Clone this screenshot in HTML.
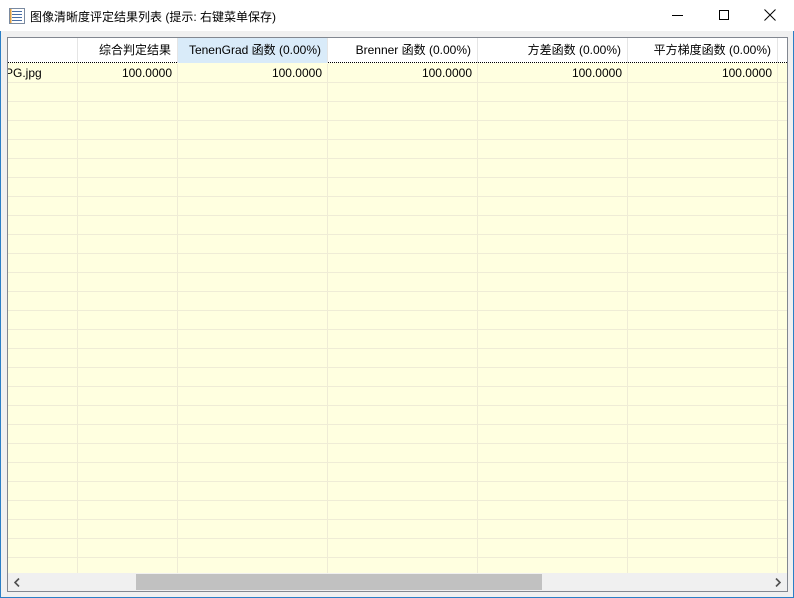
<!DOCTYPE html>
<html><head><meta charset="utf-8"><style>
*{margin:0;padding:0;box-sizing:border-box}
body{width:794px;height:598px;overflow:hidden;background:#f0f0f0;font-family:"Liberation Sans","Noto Sans CJK SC",sans-serif;font-size:12px;color:#000;position:relative}
.win{position:absolute;left:0;top:0;width:794px;height:598px;border:1px solid #2b7fc6;border-top:none}
.title{position:absolute;left:0;top:0;width:794px;height:31px;background:#fff}
.title .t{position:absolute;left:30px;top:8px;font-size:12px}
.list{position:absolute;left:7px;top:37px;width:781px;height:555px;border:1px solid #828790;background:#ffffe0;overflow:hidden}
.hdr{position:absolute;left:0;top:0;width:100%;height:25px;background:#fff;border-bottom:1px dotted #000}
.h{position:absolute;top:0;height:25px;line-height:25px;text-align:right;padding-right:6px;border-right:1px solid #e5e5e5}
.body{position:absolute;left:0;top:26px;width:100%;height:510px;
background-image:repeating-linear-gradient(to bottom,transparent 0,transparent 18px,#efecd6 18px,#efecd6 19px)}
.vl{position:absolute;top:26px;width:1px;height:510px;background:#efecd6}
.c{position:absolute;top:28px;text-align:right;padding-right:6px}
.sb{position:absolute;left:0;top:535px;width:100%;height:18px;background:#f0f0f0}
.thumb{position:absolute;left:128px;top:1px;width:406px;height:16px;background:#c1c1c1}
</style></head><body>
<div class="win"></div>
<div class="title">
<svg style="position:absolute;left:9px;top:8px" width="16" height="16"><rect x="0.5" y="0.5" width="15" height="15" fill="#fff" stroke="#7a8aa0"/><g fill="#4a6fa5"><rect x="3" y="3" width="10" height="1"/><rect x="3" y="6" width="10" height="1"/><rect x="3" y="9" width="10" height="1"/><rect x="3" y="12" width="10" height="1"/></g><rect x="1" y="1" width="1.5" height="14" fill="#e0a040"/></svg>
<div class="t">图像清晰度评定结果列表 (提示: 右键菜单保存)</div>
<div style="position:absolute;left:672px;top:15px;width:11px;height:1px;background:#000"></div>
<div style="position:absolute;left:719px;top:10px;width:10px;height:10px;border:1px solid #000"></div>
<svg style="position:absolute;left:764px;top:9px" width="12" height="12"><path d="M0.5 0.5L11.5 11.5M11.5 0.5L0.5 11.5" stroke="#000" stroke-width="1"/></svg>
</div>
<div class="list">
<div class="hdr">
<div class="h" style="left:0;width:70px"></div>
<div class="h" style="left:70px;width:100px">综合判定结果</div>
<div class="h" style="left:170px;width:150px;background:#d9ebf9">TenenGrad 函数 (0.00%)</div>
<div class="h" style="left:320px;width:150px">Brenner 函数 (0.00%)</div>
<div class="h" style="left:470px;width:150px">方差函数 (0.00%)</div>
<div class="h" style="left:620px;width:150px">平方梯度函数 (0.00%)</div>
</div>
<div class="body"></div>
<div class="vl" style="left:69px"></div>
<div class="vl" style="left:169px"></div>
<div class="vl" style="left:319px"></div>
<div class="vl" style="left:469px"></div>
<div class="vl" style="left:619px"></div>
<div class="vl" style="left:769px"></div>
<div class="c" style="left:-3px;text-align:left">PG.jpg</div>
<div class="c" style="left:70px;width:100px">100.0000</div>
<div class="c" style="left:170px;width:150px">100.0000</div>
<div class="c" style="left:320px;width:150px">100.0000</div>
<div class="c" style="left:470px;width:150px">100.0000</div>
<div class="c" style="left:620px;width:150px">100.0000</div>
<div class="sb"><div class="thumb"></div>
<svg style="position:absolute;left:6px;top:5px" width="6" height="9"><path d="M5 0.5L1 4.5L5 8.5" stroke="#505050" stroke-width="1.6" fill="none"/></svg>
<svg style="position:absolute;left:767px;top:5px" width="6" height="9"><path d="M1 0.5L5 4.5L1 8.5" stroke="#505050" stroke-width="1.6" fill="none"/></svg>
</div>
</div>
</body></html>
